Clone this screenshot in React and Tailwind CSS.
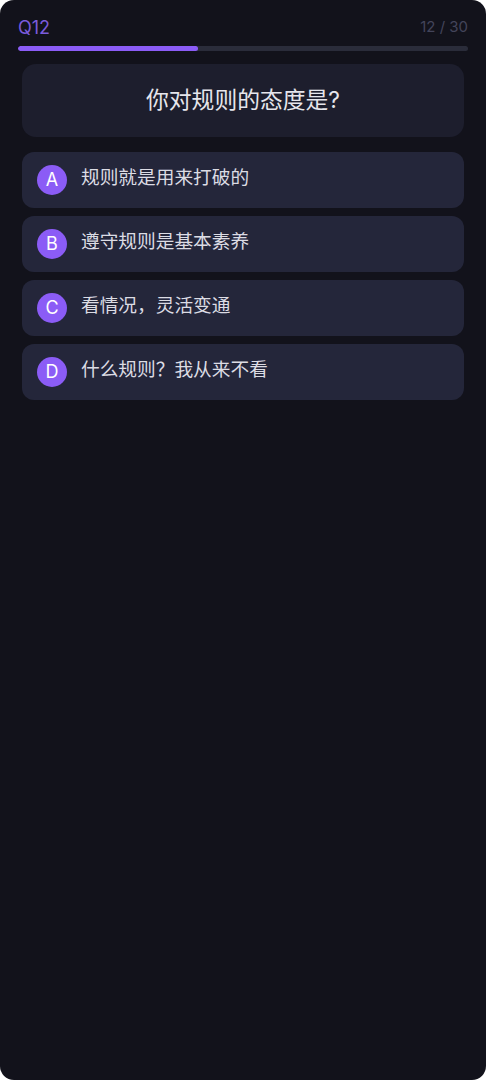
const options = [
  { key: 'A', text: '规则就是用来打破的' },
  { key: 'B', text: '遵守规则是基本素养' },
  { key: 'C', text: '看情况，灵活变通' },
  { key: 'D', text: '什么规则？我从来不看' },
];

function Option({ letter, text }) {
  return (
    <div className="h-14 rounded-xl bg-[#24263a] flex items-center px-[15px] gap-[14px]">
      <div className="w-[30px] h-[30px] rounded-full bg-[#8b5cf6] flex items-center justify-center text-white text-[18px] leading-none">
        {letter}
      </div>
      <span className="text-[18.7px] text-[#dcdce4] -mt-[3px]">{text}</span>
    </div>
  );
}

export default function App() {
  const current = 12;
  const total = 30;

  return (
    <div className="bg-white" style={{ fontFamily: 'Inter, "Noto Sans CJK SC", sans-serif' }}>
      <div className="h-[1080px] rounded-[14px] bg-[#12121b] px-[18px] pt-[15px]">
        <div className="flex items-center justify-between h-[24px]">
          <span className="text-[18px] text-[#7b5bdc]">Q{current}</span>
          <span className="text-[15px] text-[#43445a]">{current} / {total}</span>
        </div>
        <div className="mt-[7px] h-[5px] rounded-full bg-[#2a2c3a] overflow-hidden">
          <div className="h-full bg-[#8b5cf6] rounded-full" style={{ width: `${(current / total) * 100}%` }} />
        </div>
        <div className="mx-1 mt-[13px] h-[73px] rounded-[14px] bg-[#1d1e2d] flex items-center justify-center">
          <h2 className="text-[22.8px] text-[#e6e6ec]">你对规则的态度是?</h2>
        </div>
        <div className="mx-1 mt-[15px] flex flex-col gap-2">
          {options.map(o => (
            <Option key={o.key} letter={o.key} text={o.text} />
          ))}
        </div>
      </div>
    </div>
  );
}
